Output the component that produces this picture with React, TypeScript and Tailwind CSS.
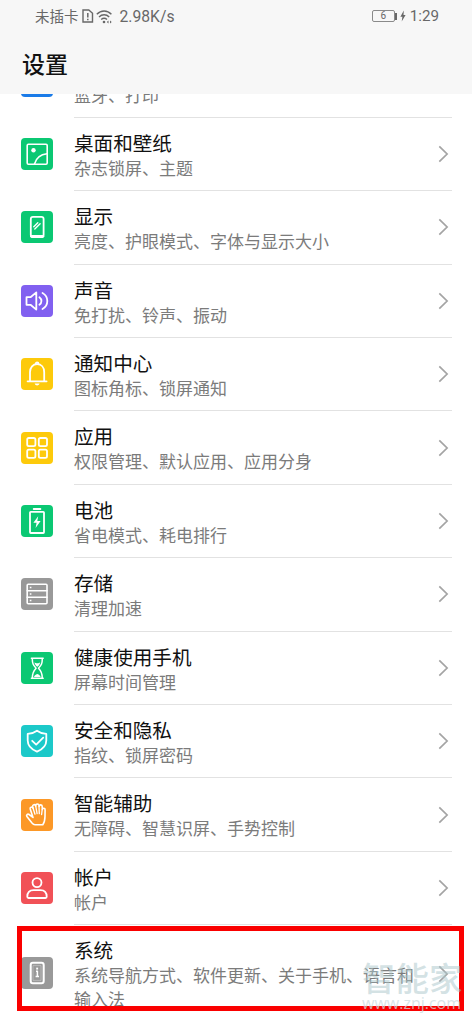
import type { ReactNode } from "react";

type Item = {
  title: string;
  detail: string;
  color: string;
  icon: ReactNode;
  tall?: boolean;
};

const items: Item[] = [
  {
    title: "设备连接",
    detail: "蓝牙、打印",
    color: "bg-[#1a7be8]",
    icon: null,
  },
  {
    title: "桌面和壁纸",
    detail: "杂志锁屏、主题",
    color: "bg-[#0bc873]",
    icon: (
      <>
        <rect x="6.2" y="6.2" width="20" height="20" rx="1.2" strokeWidth="1.6" />
        <circle cx="12.5" cy="12.3" r="2.2" fill="white" stroke="none" />
        <path d="M13.5 26C15 20.5 19 16.5 26 15.8" strokeWidth="1.6" />
      </>
    ),
  },
  {
    title: "显示",
    detail: "亮度、护眼模式、字体与显示大小",
    color: "bg-[#0bc873]",
    icon: (
      <>
        <rect x="9.8" y="5.8" width="12.8" height="20.4" rx="2.2" />
        <path d="M10.5 25.3h11.4" strokeWidth="2.6" />
        <path d="M12.8 15.7l4-4M13.8 18l5.3-5.3" strokeWidth="1.4" />
      </>
    ),
  },
  {
    title: "声音",
    detail: "免打扰、铃声、振动",
    color: "bg-[#8160f0]",
    icon: (
      <>
        <path d="M5.5 12.2h4l5.8-4.8v17.2l-5.8-4.8h-4z" />
        <path d="M18.4 12.2c2.7 2 2.7 5.6 0 7.6M21.5 8c6.4 3.6 6.4 12.4 0 16" />
      </>
    ),
  },
  {
    title: "通知中心",
    detail: "图标角标、锁屏通知",
    color: "bg-[#fdca0b]",
    icon: (
      <>
        <path d="M9 23V14.2c0-4.9 3-8 7.1-8s7.1 3.1 7.1 8V23M6.6 23.3h19" />
        <path d="M14.7 5.9a1.4 1.4 0 0 1 2.8 0" />
        <path d="M13.6 25.6h5c-.7 1.4-1.5 1.9-2.5 1.9s-1.9-.5-2.5-1.9z" fill="white" stroke="none" />
      </>
    ),
  },
  {
    title: "应用",
    detail: "权限管理、默认应用、应用分身",
    color: "bg-[#fdca0b]",
    icon: (
      <>
        <rect x="6.2" y="6" width="8.2" height="8.2" rx="1.6" />
        <rect x="17.8" y="6" width="8.2" height="8.2" rx="1.6" />
        <rect x="6.2" y="17.6" width="8.2" height="8.2" rx="1.6" />
        <rect x="17.8" y="17.6" width="8.2" height="8.2" rx="1.6" />
      </>
    ),
  },
  {
    title: "电池",
    detail: "省电模式、耗电排行",
    color: "bg-[#0bc873]",
    icon: (
      <>
        <rect x="9" y="6.8" width="14" height="21.2" rx="0.8" />
        <path d="M12.7 4h6.7" />
        <path d="M17.2 11.2l-4.8 6.5h3.2l-1 5.4 5-7h-3.3z" fill="white" stroke="none" />
      </>
    ),
  },
  {
    title: "存储",
    detail: "清理加速",
    color: "bg-[#999999]",
    icon: (
      <>
        <rect x="6.2" y="6.2" width="19.8" height="19.6" rx="1" strokeWidth="1.6" />
        <path d="M6.2 12.8H26M6.2 19.3H26" strokeWidth="1.6" />
        <path d="M8.8 9.5h1.6M8.8 16h1.6M8.8 22.5h1.6" strokeWidth="1.7" strokeLinecap="butt" />
      </>
    ),
  },
  {
    title: "健康使用手机",
    detail: "屏幕时间管理",
    color: "bg-[#0bc873]",
    icon: (
      <>
        <path
          d="M10.4 6.3h11.8M10.4 26.2h11.8M11.3 6.5c0 5 .8 6.5 3.8 9.7-3 3-3.8 5-3.8 9.8M21.3 6.5c0 5-.8 6.5-3.8 9.7 3 3 3.8 5 3.8 9.8"
          strokeWidth="1.5"
        />
        <path d="M13.4 10.4l2 .8h1.8l2-.8c-.5 2-1.5 3.2-2.9 4.3-1.4-1.1-2.4-2.3-2.9-4.3zM13 25c.3-1.6 1.5-2.6 3.3-3.1 1.8.5 3 1.5 3.3 3.1z" fill="white" stroke="none" />
      </>
    ),
  },
  {
    title: "安全和隐私",
    detail: "指纹、锁屏密码",
    color: "bg-[#1cc9c9]",
    icon: (
      <>
        <path d="M16 5.7c2.7 2 5.7 3 9.3 3.2v6.600c0 5.300-3.600 8.800-9.300 11.200-5.700-2.400-9.300-5.900-9.300-11.200V8.900C10.300 8.700 13.300 7.700 16 5.700z" />
        <path d="M11.2 15.8l4 3.8 7-6.9" />
      </>
    ),
  },
  {
    title: "智能辅助",
    detail: "无障碍、智慧识屏、手势控制",
    color: "bg-[#fc9827]",
    icon: (
      <>
        <path
          d="M12 18.4L9.2 10.1c-.6-2 2.1-2.9 2.9-.9l-.4-1.5c-.4-2.2 2.5-2.8 3-.7l.1-.4c0-2.2 3-2.2 3.2 0l.2.7c.2-2 3.1-1.8 3 .3l.1 2.9c.4-1.9 3-1.5 2.8.5l-.1 6.5c-.1 4-1 6.6-2.2 8.2H14c-1.2 0-2.300-.8-3.200-1.900l-4.900-6.300c-1-1.500.7-3 2.200-2z"
          strokeWidth="1.6"
        />
        <path d="M12.1 9.2l1.9 6M14.7 7l1.4 7.6M18 7.3l.3 7.4M21.2 10.5l-.6 5" strokeWidth="1.3" />
      </>
    ),
  },
  {
    title: "帐户",
    detail: "帐户",
    color: "bg-[#f15157]",
    icon: (
      <>
        <circle cx="16" cy="10.6" r="4.5" />
        <path d="M6.3 24.8c0-5 2.7-6.7 6.2-6.7h7c3.5 0 6.2 1.7 6.2 6.7q0 1.2-1.2 1.2h-17q-1.2 0-1.2-1.2z" />
      </>
    ),
  },
  {
    title: "系统",
    detail: "系统导航方式、软件更新、关于手机、语言和输入法",
    color: "bg-[#999999]",
    tall: true,
    icon: (
      <>
        <rect x="9.7" y="5.7" width="13" height="20.6" rx="2.2" strokeWidth="2" />
        <path d="M12.4 8.6h7.6v14.8h-7.6z" strokeWidth="0.5" opacity="0.6" />
        <path d="M15 14.3h1.4v4.8M14.6 19.4h3.4" strokeWidth="1.5" strokeLinecap="butt" />
        <path d="M15.2 11.6h1.9" strokeWidth="1.9" strokeLinecap="butt" />
      </>
    ),
  },
];

function Row({ item }: { item: Item }) {
  return (
    <div className={`flex shrink-0 pl-[21px] ${item.tall ? "h-[97.4px]" : "h-[73.4px]"}`}>
      <div className="flex w-[53px] items-center pb-px">
        <div className={`size-8 rounded-[4px] ${item.color}`}>
          <svg
            viewBox="0 0 32 32"
            className="size-8"
            fill="none"
            stroke="white"
            strokeWidth="1.8"
            strokeLinecap="round"
            strokeLinejoin="round"
          >
            {item.icon}
          </svg>
        </div>
      </div>
      <div className={`mr-5 flex flex-1 items-center ${item.tall ? "" : "border-b border-[#e2e2e2]"}`}>
        <div className="w-[350px] self-start pt-[12px]">
          <div className="text-[19.6px] leading-[26px] text-[#111]">{item.title}</div>
          <div className="text-[17px] leading-[24px] text-[#7b7b7b]">{item.detail}</div>
        </div>
        <svg viewBox="0 0 12 18" className="ml-[14px] h-[18px] w-3 shrink-0" fill="none" stroke="#a4a4a4" strokeWidth="1.7">
          <path d="M1.3 1.3L9.1 9l-7.8 7.7" />
        </svg>
      </div>
    </div>
  );
}

function StatusBar() {
  return (
    <div className="flex h-[33px] items-center justify-between pl-[35px] pr-[33px] text-[#686868]">
      <div className="flex items-center">
        <span className="text-[14.5px] leading-none">未插卡</span>
        <svg viewBox="0 0 12 14" className="ml-[3px] h-[14px] w-3" fill="none" stroke="currentColor" strokeWidth="1.4">
          <path d="M1 1h5.8l3.7 3.2V13H1z" />
          <path d="M5.8 4v4.5M5.8 9.8v1.5" strokeWidth="1.5" />
        </svg>
        <svg viewBox="0 0 18 15" className="ml-[2px] h-[15px] w-[18px]" fill="none" stroke="currentColor" strokeWidth="1.4">
          <path d="M.8 5.3c4.2-4.4 10.4-4.4 14.6 0M3 8c3-3 7.2-3 10.2 0M5.200 10.600c1.800-1.600 4-1.600 5.800 0" />
          <circle cx="8" cy="13" r="1.3" fill="currentColor" stroke="none" />
          <path d="M12.5 11.6v3l-1.7-1.5zM14 11.6v3l1.7-1.5z" fill="currentColor" stroke="none" />
        </svg>
        <span className="ml-[6px] font-[Roboto] text-[15.7px] leading-none">2.98K/s</span>
      </div>
      <div className="flex items-center font-[Roboto]">
        <div className="flex h-3 w-[23px] items-center justify-center rounded-[2px] border border-[#8a8a8a] text-[10px] leading-none">6</div>
        <div className="h-[7px] w-[2px] bg-[#686868]" />
        <svg viewBox="0 0 6 12" className="ml-[3px] h-3 w-[6px]" fill="currentColor">
          <path d="M3.8.5L.4 6.8h2l-.7 4.7L5.6 5H3.500z" />
        </svg>
        <span className="ml-[4px] text-[15.2px] leading-none">1:29</span>
      </div>
    </div>
  );
}

export default function App() {
  return (
    <div className="relative flex h-[1022px] w-[472px] flex-col overflow-hidden bg-white font-['Noto_Sans_CJK_SC',sans-serif]">
      <header className="h-[94px] shrink-0 bg-[#f7f7f7]">
        <StatusBar />
        <h1 className="pl-[22px] pt-[12px] text-[23px] font-medium leading-[36px] text-[#111]">设置</h1>
      </header>
      <main className="min-h-0 flex-1 overflow-hidden">
        <div className="-mt-[49.5px] flex flex-col">
          {items.map((item) => (
            <Row key={item.title} item={item} />
          ))}
        </div>
      </main>
      <div className="absolute left-[17px] top-[926px] h-[85px] w-[447px] border-[5px] border-[#fa0000]" />
      <div className="absolute left-[362px] top-[959px] w-[102px] text-[#a9c5ca]/50">
        <div className="text-[33.5px] font-medium leading-[36px]">智能家</div>
        <div className="mt-[-1px] font-['Open_Sans'] text-[16px] leading-[18px] text-[#cbdcdf]/75">www.znj.com</div>
      </div>
    </div>
  );
}
